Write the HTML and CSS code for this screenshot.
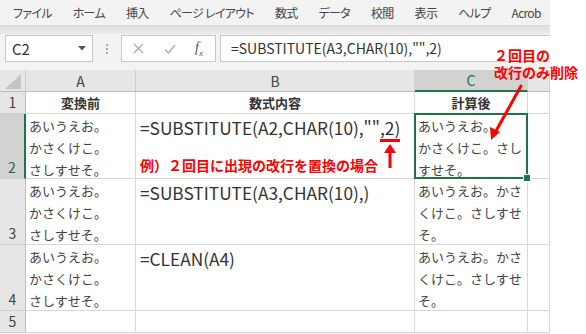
FILE: index.html
```html
<!DOCTYPE html>
<html lang="ja">
<head>
  <meta charset="UTF-8" />
  <title>SUBSTITUTE / CLEAN</title>
  <link rel="stylesheet" href="styles.css">
</head>
<body>
  <div class="page">
    <div class="app">
      <div class="tabs">
        <span>ファイル</span><span>ホーム</span><span>挿入</span><span>ページ レイアウト</span><span>数式</span><span>データ</span><span>校閲</span><span>表示</span><span>ヘルプ</span><span>Acrob</span>
      </div>
      <div class="band"></div>
      <div class="fbar">
        <div class="namebox">
          <span>C2</span>
          <svg width="8" height="5" viewBox="0 0 8 5"><path d="M0 0h8L4 4.5z" fill="#555"/></svg>
        </div>
        <div class="dots"><i></i><i></i><i></i></div>
        <div class="fbtns">
          <svg width="11" height="11" viewBox="0 0 11 11"><path d="M1 1l9 9M10 1l-9 9" stroke="#aaa" stroke-width="1.3"/></svg>
          <svg width="12" height="10" viewBox="0 0 12 10"><path d="M1 5.5l3.5 3.5L11 1" stroke="#aaa" stroke-width="1.3" fill="none"/></svg>
          <span class="fx">f<sub>x</sub></span>
        </div>
        <div class="finput">=SUBSTITUTE(A3,CHAR(10),"",2)</div>
      </div>

      <div class="sheet">
        <div class="corner"><span class="tri"></span></div>
        <div class="hd">A</div>
        <div class="hd">B</div>
        <div class="hd sel">C</div>
        <div class="hd"></div>

        <div class="rh">1</div>
        <div class="c head">変換前</div>
        <div class="c head">数式内容</div>
        <div class="c head">計算後</div>
        <div class="c"></div>

        <div class="rh sel">2</div>
        <div class="c txt">あいうえお。<br>かさくけこ。<br>さしすせそ。</div>
        <div class="c fm">
          <span>=SUBSTITUTE(A2,CHAR(10),"",2)</span>
          <span class="ex">例）２回目に出現の改行を置換の場合</span>
        </div>
        <div class="c txt wrap active">あいうえお。<br>かさくけこ。さしすせそ。</div>
        <div class="c"></div>

        <div class="rh">3</div>
        <div class="c txt">あいうえお。<br>かさくけこ。<br>さしすせそ。</div>
        <div class="c fm"><span>=SUBSTITUTE(A3,CHAR(10),)</span></div>
        <div class="c txt wrap">あいうえお。かさくけこ。さしすせそ。</div>
        <div class="c"></div>

        <div class="rh">4</div>
        <div class="c txt">あいうえお。<br>かさくけこ。<br>さしすせそ。</div>
        <div class="c fm"><span>=CLEAN(A4)</span></div>
        <div class="c txt wrap">あいうえお。かさくけこ。さしすせそ。</div>
        <div class="c"></div>

        <div class="rh">5</div>
        <div class="c"></div>
        <div class="c"></div>
        <div class="c"></div>
        <div class="c"></div>
      </div>
    </div>

    <div class="note">２回目の<br>改行のみ削除</div>

    <svg class="marks" width="586" height="334" viewBox="0 0 586 334">
      <!-- arrow from the note to C2 -->
      <path d="M521 86L496 131" stroke="#f00" stroke-width="3" stroke-linecap="round"/>
      <path d="M491 140l-1-13 10 5z" fill="#f00"/>
      <!-- marker under ",2" -->
      <rect x="380" y="139" width="20" height="3" fill="#f00"/>
      <path d="M390 144l-6 9h12z" fill="#f00"/>
      <rect x="388.5" y="151" width="3" height="17" fill="#f00"/>
    </svg>
  </div>
</body>
</html>
```

FILE: styles.css
```css
* {
  box-sizing: border-box;
}
body {
  margin: 0;
  background: #fff;
  font-family: "Noto Sans CJK JP", sans-serif;
  color: #333;
}
.page {
  position: relative;
  width: 586px;
  height: 334px;
  overflow: hidden;
}
.app {
  width: 550px;
  height: 334px;
  overflow: hidden;
  background: #f3f3f3;
}
.tabs {
  display: flex;
  gap: 21px;
  align-items: center;
  height: 25px;
  padding-left: 13px;
  font-size: 12px;
  letter-spacing: -0.7px;
  color: #444;
  white-space: nowrap;
  font-feature-settings: "palt";
}
.band {
  height: 9px;
  border-top: 1px solid #d9d9d9;
  background: linear-gradient(#e0e0e0, #ebebeb);
}
.fbar {
  display: flex;
  align-items: flex-start;
  height: 36px;
  padding: 1px 0 0 5px;
}
.namebox {
  display: flex;
  align-items: center;
  justify-content: space-between;
  width: 88px;
  height: 27px;
  padding: 0 6px 0 6px;
  background: #fff;
  border: 1px solid #c8c8c8;
  font-size: 15px;
  color: #333;
}
.dots {
  display: flex;
  flex-direction: column;
  align-items: center;
  gap: 2px;
  width: 28px;
  padding-top: 9px;
}
.dots i {
  width: 2px;
  height: 2px;
  background: #a8a8a8;
}
.fbtns {
  display: flex;
  align-items: center;
  justify-content: space-between;
  width: 95px;
  height: 27px;
  padding: 0 12px 0 11px;
  background: #fff;
  border: 1px solid #c8c8c8;
}
.fx {
  font-family: "Liberation Serif", serif;
  font-style: italic;
  font-size: 14px;
  color: #555;
}
.fx sub {
  font-size: 9px;
}
.finput {
  flex: 1;
  height: 27px;
  margin-left: 4px;
  padding-left: 10px;
  background: #fff;
  border: 1px solid #c8c8c8;
  border-right: none;
  font-size: 14px;
  line-height: 25px;
  color: #333;
  white-space: nowrap;
}
.sheet {
  display: grid;
  grid-template-columns: 26px 110px 279px 113px 22px;
  grid-template-rows: 22px 22px 65px 66px 66px 22px;
  background: #fff;
}
.corner {
  position: relative;
  background: #e6e6e6;
  border-right: 1px solid #cfcfcf;
  border-bottom: 1px solid #bdbdbd;
}
.tri {
  position: absolute;
  right: 4px;
  bottom: 2px;
  width: 0;
  height: 0;
  border-left: 16px solid transparent;
  border-bottom: 15px solid #c3c3c3;
}
.hd {
  display: flex;
  align-items: center;
  justify-content: center;
  background: #e6e6e6;
  border-right: 1px solid #cfcfcf;
  border-bottom: 1px solid #bdbdbd;
  font-size: 14px;
  color: #444;
}
.hd.sel {
  background: #d2d2d2;
  color: #217346;
  border-bottom: 2px solid #217346;
}
.rh {
  display: flex;
  align-items: flex-end;
  justify-content: center;
  padding-bottom: 1px;
  background: #e6e6e6;
  border-right: 1px solid #bdbdbd;
  border-bottom: 1px solid #cfcfcf;
  font-size: 14px;
  color: #444;
}
.rh.sel {
  background: #d2d2d2;
  color: #2f5d43;
  border-right: 2px solid #217346;
}
.c {
  position: relative;
  border-right: 1px solid #d8d8d8;
  border-bottom: 1px solid #d8d8d8;
}
.head {
  display: flex;
  align-items: center;
  justify-content: center;
  font-size: 13px;
  font-weight: bold;
  color: #333;
}
.txt {
  padding: 1px 0 0 3px;
  font-size: 13px;
  line-height: 22px;
  color: #444;
}
.wrap {
  padding-right: 4px;
}
.active::after {
  content: "";
  position: absolute;
  left: -1px;
  top: -1px;
  right: -1px;
  bottom: -1px;
  border: 2px solid #217346;
}
.active::before {
  content: "";
  position: absolute;
  right: -4px;
  bottom: -4px;
  width: 6px;
  height: 6px;
  background: #217346;
  border: 1px solid #fff;
  z-index: 1;
}
.fm {
  display: flex;
  flex-direction: column;
  justify-content: space-between;
  padding: 1px 0 3px 4px;
  font-size: 17.3px;
  line-height: 26px;
  color: #333;
  white-space: nowrap;
}
.ex {
  font-size: 14px;
  line-height: 20px;
  font-weight: bold;
  color: #f00;
}
.note {
  position: absolute;
  left: 494px;
  top: 47px;
  font-size: 14px;
  line-height: 17px;
  font-weight: bold;
  color: #f00;
}
.marks {
  position: absolute;
  left: 0;
  top: 0;
  pointer-events: none;
}
```
